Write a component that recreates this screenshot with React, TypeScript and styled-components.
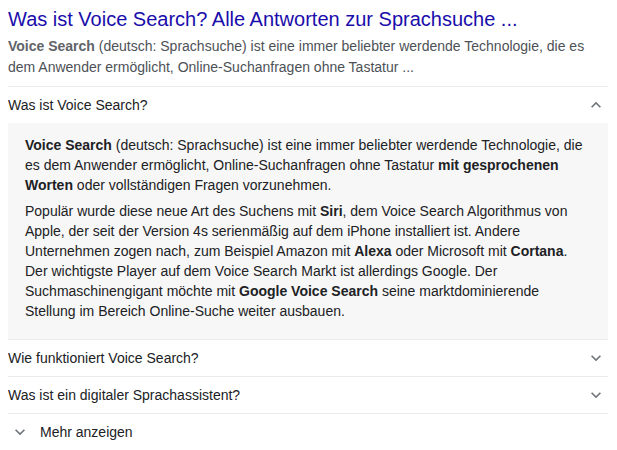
import { createGlobalStyle, styled } from 'styled-components'

const GlobalStyle = createGlobalStyle`
  body {
    margin: 8px;
    background: #fff;
    font-family: "Liberation Sans", Arial, sans-serif;
  }
`

const Result = styled.div`
  width: 600px;
`

const Title = styled.a`
  display: block;
  font-size: 20px;
  line-height: 22px;
  color: #1a0dab;
  text-decoration: none;
`

const Snippet = styled.div`
  font-size: 14px;
  line-height: 21px;
  color: #4d5156;
  margin-top: 6px;
  padding-bottom: 8px;
  b {
    color: #5f6368;
  }
`

const Row = styled.div`
  display: flex;
  align-items: center;
  justify-content: space-between;
  height: 36px;
  border-top: 1px solid #ebebeb;
  font-size: 14px;
  color: #202124;
`

const Panel = styled.div`
  background: #f7f7f7;
  padding: 12px 17px 18px 17px;
  font-size: 14px;
  line-height: 20px;
  color: #202124;
  p {
    margin: 0 0 6px;
  }
  p:last-child {
    margin-bottom: 0;
  }
`

const More = styled.div`
  display: flex;
  align-items: center;
  gap: 8px;
  height: 36px;
  border-top: 1px solid #ebebeb;
  padding-left: 2px;
  font-size: 14px;
  color: #202124;
`

const Chevron = ({ up }: { up?: boolean }) => (
  <svg width="20" height="20" viewBox="0 0 24 24" style={{ marginRight: 2 }}>
    <path
      d={up ? 'M7.41 15.41 12 10.83l4.59 4.58L18 14l-6-6-6 6z' : 'M7.41 8.59 12 13.17l4.59-4.58L18 10l-6 6-6-6z'}
      fill="#70757a"
    />
  </svg>
)

const questions = ['Wie funktioniert Voice Search?', 'Was ist ein digitaler Sprachassistent?']

export default function App() {
  return (
    <>
      <GlobalStyle />
      <Result>
        <Title href="#">Was ist Voice Search? Alle Antworten zur Sprachsuche ...</Title>
        <Snippet>
          <b>Voice Search</b> (deutsch: Sprachsuche) ist eine immer beliebter werdende Technologie, die es
          dem Anwender ermöglicht, Online-Suchanfragen ohne Tastatur ...
        </Snippet>
        <Row>
          <span>Was ist Voice Search?</span>
          <Chevron up />
        </Row>
        <Panel>
          <p>
            <b>Voice Search</b> (deutsch: Sprachsuche) ist eine immer beliebter werdende Technologie, die es dem
            Anwender ermöglicht, Online-Suchanfragen ohne Tastatur <b>mit gesprochenen Worten</b> oder
            vollständigen Fragen vorzunehmen.
          </p>
          <p>
            Populär wurde diese neue Art des Suchens mit <b>Siri</b>, dem Voice Search Algorithmus von Apple,
            der seit der Version 4s serienmäßig auf dem iPhone installiert ist. Andere Unternehmen zogen nach,
            zum Beispiel Amazon mit <b>Alexa</b> oder Microsoft mit <b>Cortana</b>. Der wichtigste Player auf
            dem Voice Search Markt ist allerdings Google. Der Suchmaschinengigant möchte mit{' '}
            <b>Google Voice Search</b> seine marktdominierende Stellung im Bereich Online-Suche weiter
            ausbauen.
          </p>
        </Panel>
        {questions.map(q => (
          <Row key={q}>
            <span>{q}</span>
            <Chevron />
          </Row>
        ))}
        <More>
          <Chevron />
          <span>Mehr anzeigen</span>
        </More>
      </Result>
    </>
  )
}
